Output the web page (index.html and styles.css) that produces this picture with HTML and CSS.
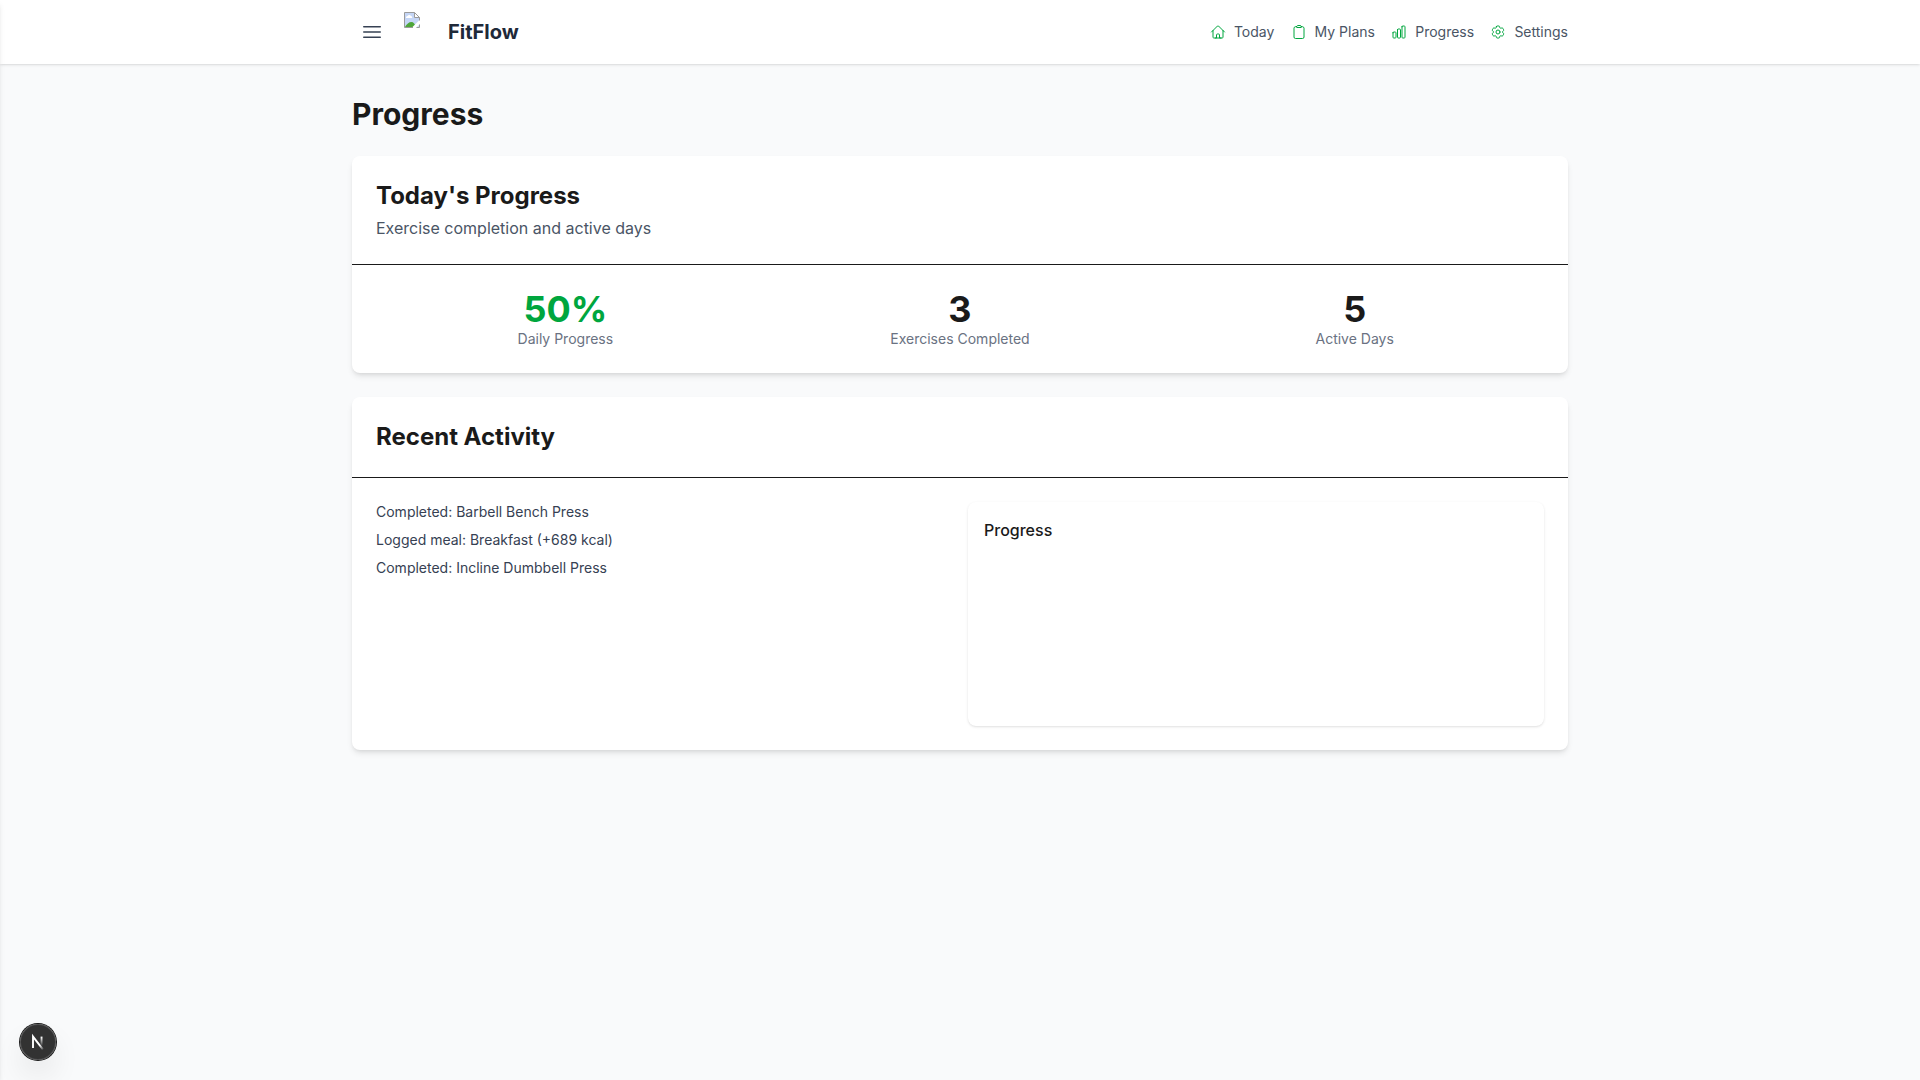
FILE: index.html
```html
<!DOCTYPE html>
<html lang="en">
<head>
<meta charset="utf-8">
<title>FitFlow</title>
<link rel="stylesheet" href="styles.css">
</head>
<body>
<aside class="drawer"></aside>
<header class="navbar">
  <div class="container navbar-inner">
    <div class="brand-group">
      <button class="menu-button" aria-label="Menu">
        <svg class="icon-lg" viewBox="0 0 24 24"><path d="M3.75 6.75h16.5M3.75 12h16.5m-16.5 5.25h16.5"/></svg>
      </button>
      <a class="brand">
        <svg class="brand-image" viewBox="0 0 32 32">
          <path d="M.5.5h10l5 5v10H.5z" fill="#c5d6f6"/>
          <path d="M2 5.5a1.5 1.5 0 0 1 1.5-1.5 2 2 0 0 1 3.5 0 1.3 1.3 0 0 1 1 2H2z" fill="#fff"/>
          <path d="M1 15c1.500-3 4-5 6.500-5 2 0 3.500 2 4.500 5z" fill="#4fa63a"/>
          <path d="M16 7.500 7.500 16H12l4-4z" fill="#fff"/>
          <path d="M10.500.5v5h5z" fill="#fff"/>
          <path d="M9 15.500H.5V.5h10l5 5v3M10.500.5v5h5M12.500 15.500h3v-3" fill="none" stroke="#9b9b9b"/>
        </svg>
        <span class="brand-name">FitFlow</span>
      </a>
    </div>
    <nav class="nav-links">
      <a class="nav-link"><svg class="icon" viewBox="0 0 24 24"><path d="m2.25 12 8.954-8.955c.44-.439 1.152-.439 1.591 0L21.75 12M4.5 9.75v10.125c0 .621.504 1.125 1.125 1.125H9.75v-4.875c0-.621.504-1.125 1.125-1.125h2.250c.621 0 1.125.504 1.125 1.125V21h4.125c.621 0 1.125-.504 1.125-1.125V9.75M8.25 21h8.25"/></svg>Today</a>
      <a class="nav-link"><svg class="icon" viewBox="0 0 24 24"><path d="M15.666 3.888A2.25 2.25 0 0 0 13.5 2.25h-3c-1.03 0-1.9.693-2.166 1.638m7.332 0c.055.194.084.4.084.612v0a.75.75 0 0 1-.75.75H9a.75.75 0 0 1-.75-.75v0c0-.212.03-.418.084-.612m7.332 0c.646.049 1.288.11 1.927.184 1.1.128 1.907 1.077 1.907 2.185V19.5a2.25 2.25 0 0 1-2.25 2.25H6.75A2.25 2.25 0 0 1 4.5 19.5V6.257c0-1.108.806-2.057 1.907-2.185a48.208 48.208 0 0 1 1.927-.184"/></svg>My Plans</a>
      <a class="nav-link"><svg class="icon" viewBox="0 0 24 24"><path d="M3 13.125C3 12.504 3.504 12 4.125 12h2.250c.621 0 1.125.504 1.125 1.125v6.750C7.500 20.496 6.996 21 6.375 21h-2.250A1.125 1.125 0 0 1 3 19.875v-6.750ZM9.750 8.625c0-.621.504-1.125 1.125-1.125h2.250c.621 0 1.125.504 1.125 1.125v11.250c0 .621-.504 1.125-1.125 1.125h-2.250a1.125 1.125 0 0 1-1.125-1.125V8.625ZM16.500 4.125c0-.621.504-1.125 1.125-1.125h2.250C20.496 3 21 3.504 21 4.125v15.750c0 .621-.504 1.125-1.125 1.125h-2.250a1.125 1.125 0 0 1-1.125-1.125V4.125Z"/></svg>Progress</a>
      <a class="nav-link"><svg class="icon" viewBox="0 0 24 24"><path d="M9.594 3.940c.090-.542.560-.940 1.110-.940h2.593c.550 0 1.020.398 1.110.940l.213 1.281c.063.374.313.686.645.870.074.040.147.083.220.127.325.196.720.257 1.075.124l1.217-.456a1.125 1.125 0 0 1 1.370.490l1.296 2.247a1.125 1.125 0 0 1-.260 1.431l-1.003.827c-.293.241-.438.613-.430.992a7.723 7.723 0 0 1 0 .255c-.008.378.137.750.430.991l1.004.827c.424.350.534.955.260 1.430l-1.298 2.247a1.125 1.125 0 0 1-1.369.491l-1.217-.456c-.355-.133-.750-.072-1.076.124a6.470 6.470 0 0 1-.220.128c-.331.183-.581.495-.644.869l-.213 1.281c-.090.543-.560.940-1.110.940h-2.594c-.550 0-1.019-.398-1.110-.940l-.213-1.281c-.062-.374-.312-.686-.644-.870a6.520 6.520 0 0 1-.220-.127c-.325-.196-.720-.257-1.076-.124l-1.217.456a1.125 1.125 0 0 1-1.369-.490l-1.297-2.247a1.125 1.125 0 0 1 .260-1.431l1.004-.827c.292-.240.437-.613.430-.991a6.932 6.932 0 0 1 0-.255c.007-.380-.138-.751-.430-.992l-1.004-.827a1.125 1.125 0 0 1-.260-1.430l1.297-2.247a1.125 1.125 0 0 1 1.370-.491l1.216.456c.356.133.751.072 1.076-.124.072-.044.146-.086.220-.128.332-.183.582-.495.644-.869l.214-1.280Z"/><path d="M15 12a3 3 0 1 1-6 0 3 3 0 0 1 6 0Z"/></svg>Settings</a>
    </nav>
  </div>
</header>

<main class="container page">
  <h1 class="page-title">Progress</h1>

  <section class="card">
    <div class="card-header">
      <h2 class="card-title">Today's Progress</h2>
      <p class="card-subtitle">Exercise completion and active days</p>
    </div>
    <div class="stats">
      <div class="stat"><div class="stat-value stat-value-accent">50%</div><div class="stat-label">Daily Progress</div></div>
      <div class="stat"><div class="stat-value">3</div><div class="stat-label">Exercises Completed</div></div>
      <div class="stat"><div class="stat-value">5</div><div class="stat-label">Active Days</div></div>
    </div>
  </section>

  <section class="card">
    <div class="card-header">
      <h2 class="card-title">Recent Activity</h2>
    </div>
    <div class="activity">
      <ul class="activity-list">
        <li>Completed: Barbell Bench Press</li>
        <li>Logged meal: Breakfast (+689 kcal)</li>
        <li>Completed: Incline Dumbbell Press</li>
      </ul>
      <div class="chart-panel">
        <h3 class="chart-title">Progress</h3>
      </div>
    </div>
  </section>
</main>

<button class="dev-badge" aria-label="Open developer tools">
  <svg class="dev-mark" viewBox="0 0 36 36">
    <defs>
      <linearGradient id="diagonal" gradientUnits="userSpaceOnUse" x1="9.77" y1="10.7" x2="14" y2="16">
        <stop stop-color="#fff"/><stop offset="1" stop-color="#fff" stop-opacity="0"/>
      </linearGradient>
      <linearGradient id="upright" gradientUnits="userSpaceOnUse" x1="11.8" y1="1.5" x2="11.8" y2="11.5">
        <stop stop-color="#fff"/><stop offset="1" stop-color="#fff" stop-opacity="0"/>
      </linearGradient>
    </defs>
    <g transform="translate(10.900 11.700) scale(.9)" fill="none" stroke-width="2.100">
      <path d="M13.300 15.200 2.340 1v12.600" stroke="url(#diagonal)"/>
      <path d="M11.825 1v12.100" stroke="url(#upright)"/>
    </g>
  </svg>
</button>
</body>
</html>
```
FILE: styles.css
```css
*, *::before, *::after { box-sizing: border-box; }

body {
  margin: 0;
  min-height: 100vh;
  background: #f9fafb;
  color: #1a1a1a;
  font-family: Inter, "Liberation Sans", sans-serif;
  font-size: 16px;
  line-height: 24px;
}

h1, h2, h3, p, ul { margin: 0; padding: 0; }
ul { list-style: none; }
button { border: 0; background: none; padding: 0; }
svg { display: block; }

.container {
  width: 100%;
  max-width: 1280px;
  margin: 0 auto;
  padding: 0 32px;
}

/* Off-canvas menu, closed: only its shadow reaches the viewport */
.drawer {
  position: fixed;
  top: 0;
  bottom: 0;
  left: 0;
  z-index: 20;
  width: 256px;
  transform: translateX(-100%);
  background: #fff;
  box-shadow: 0 4px 6px -1px rgb(0 0 0 / 0.1), 0 2px 4px -2px rgb(0 0 0 / 0.1);
}

.navbar {
  position: relative;
  background: #fff;
  box-shadow: 0 1px 3px 0 rgb(0 0 0 / 0.1), 0 1px 2px -1px rgb(0 0 0 / 0.1);
}
.navbar-inner {
  display: flex;
  align-items: center;
  justify-content: space-between;
  height: 64px;
}
.brand-group { display: flex; align-items: center; gap: 12px; }
.menu-button { padding: 8px; color: #364153; }
.brand { display: flex; align-items: center; gap: 12px; }
.brand-image { width: 32px; height: 32px; margin-bottom: 8px; }
.brand-name { font-size: 20px; line-height: 28px; font-weight: 700; color: #1e2939; }

.icon, .icon-lg {
  fill: none;
  stroke: currentColor;
  stroke-width: 1.5;
  stroke-linecap: round;
  stroke-linejoin: round;
}
.icon-lg { width: 24px; height: 24px; }
.icon { width: 16px; height: 16px; color: #00a63e; }

.nav-links { display: flex; gap: 16.25px; }
.nav-link {
  display: flex;
  align-items: center;
  gap: 8px;
  font-size: 14px;
  line-height: 20px;
  color: #4a5565;
}

.page { padding-top: 32px; padding-bottom: 32px; }
.page-title {
  margin-bottom: 24px;
  font-size: 30px;
  line-height: 36px;
  font-weight: 700;
}

.card {
  margin-bottom: 24px;
  background: #fff;
  border-radius: 8px;
  box-shadow: 0 4px 6px -1px rgb(0 0 0 / 0.1), 0 2px 4px -2px rgb(0 0 0 / 0.1);
}
.card-header { padding: 24px; border-bottom: 1px solid; }
.card-title { font-size: 24px; line-height: 32px; font-weight: 700; }
.card-subtitle { margin-top: 4px; color: #4a5565; }

.stats {
  display: grid;
  grid-template-columns: repeat(3, 1fr);
  gap: 16px;
  padding: 24px;
  text-align: center;
}
.stat-value { font-size: 36px; line-height: 40px; font-weight: 700; }
.stat-value-accent { color: #00a63e; }
.stat-label { font-size: 14px; line-height: 20px; color: #6a7282; }

.activity {
  display: grid;
  grid-template-columns: repeat(2, 1fr);
  gap: 16px;
  padding: 24px;
}
.activity-list {
  display: flex;
  flex-direction: column;
  gap: 8px;
  font-size: 14px;
  line-height: 20px;
  color: #364153;
}
.chart-panel {
  height: 224px;
  padding: 16px;
  border-radius: 8px;
  background: #fff;
  box-shadow: 0 1px 3px 0 rgb(0 0 0 / 0.1), 0 1px 2px -1px rgb(0 0 0 / 0.1);
}
.chart-title { font-size: 16px; line-height: 24px; font-weight: 500; }

.dev-badge {
  position: fixed;
  left: 20px;
  bottom: 20px;
  z-index: 30;
  width: 36px;
  height: 36px;
  border-radius: 50%;
  background: rgb(0 0 0 / 0.8);
  box-shadow: 0 0 0 1px #171717, inset 0 0 0 1px rgb(255 255 255 / 0.14), 0 16px 32px -8px rgb(0 0 0 / 0.24);
}
.dev-mark { width: 36px; height: 36px; }
```
